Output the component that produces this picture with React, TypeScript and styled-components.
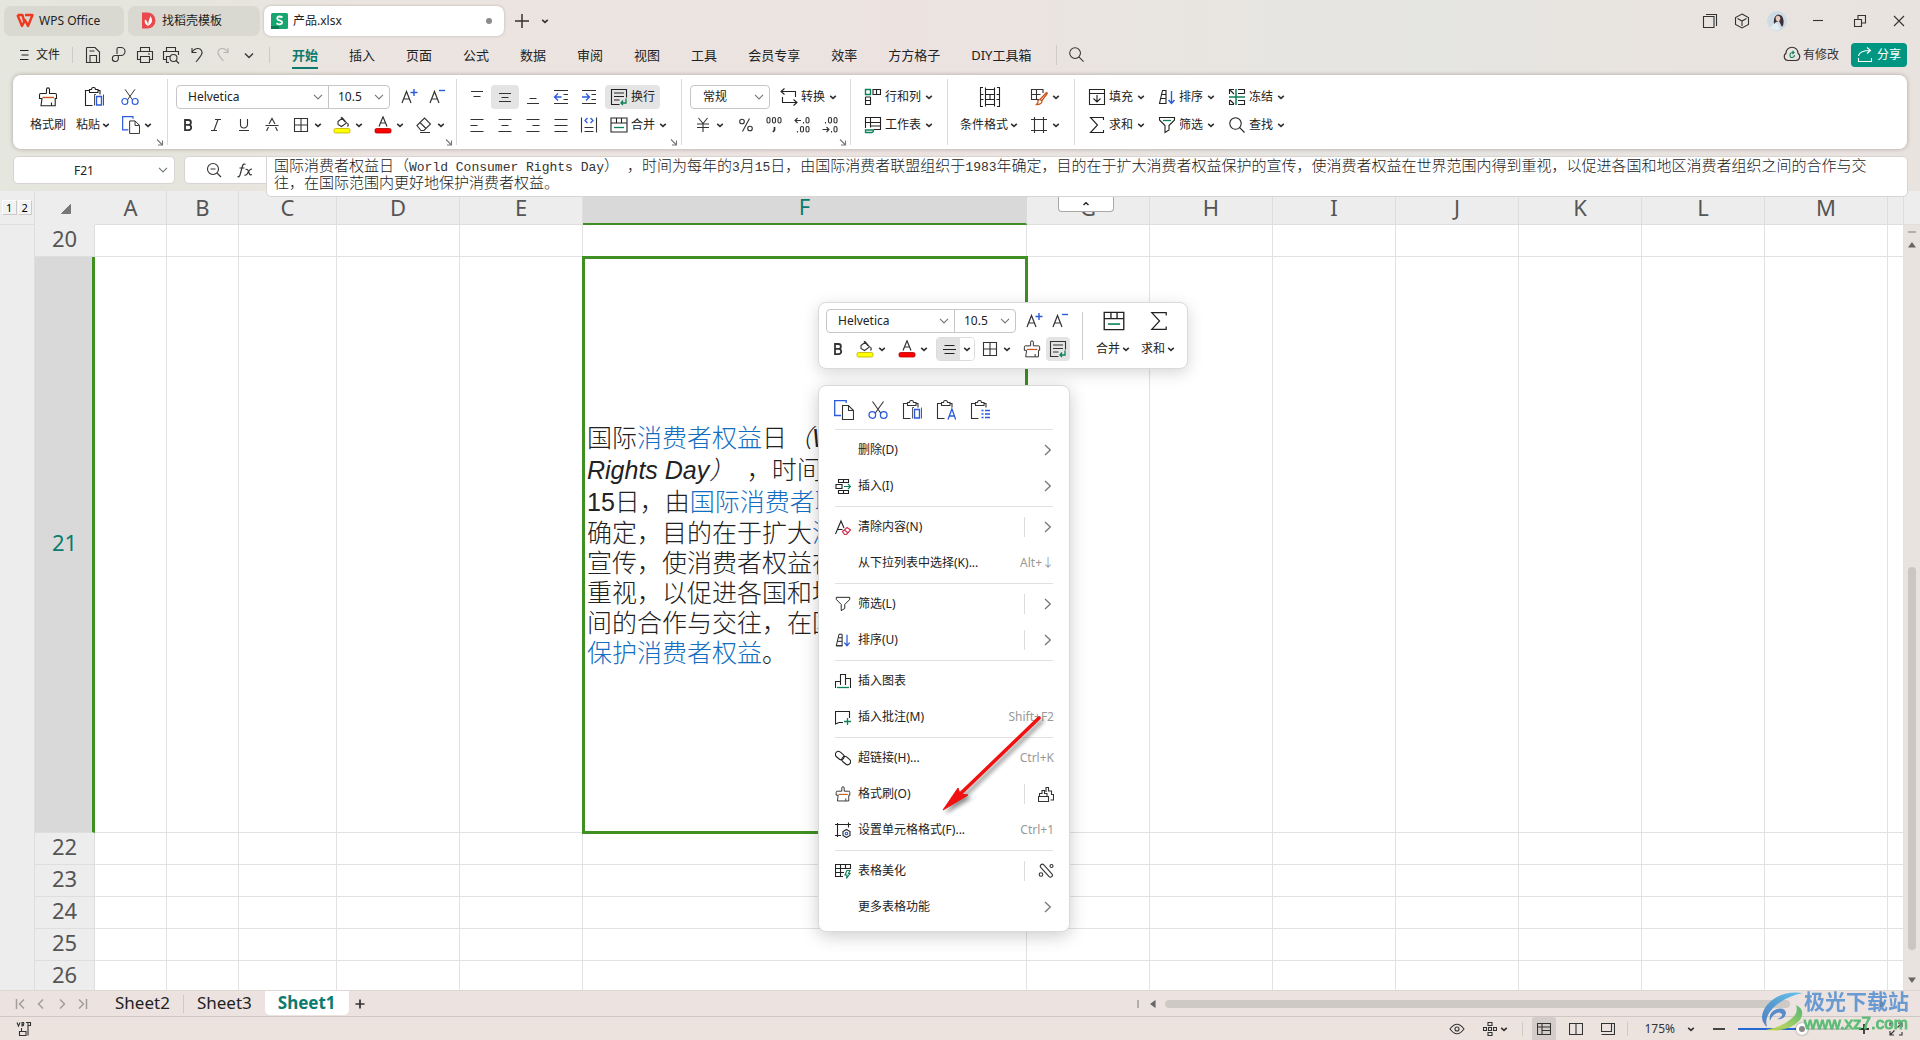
import React from "react";
import styled, { createGlobalStyle, css } from "styled-components";

const UI = `"Noto Sans", "Noto Sans CJK SC", sans-serif`;
const INK = "#333333";
const BLUE = "#2b5bdc";
const GREEN = "#0c8157";
const TEAL = "#0a7b6e";
const ORANGE = "#c8581e";
const LINE = "#dedede";

const Global = createGlobalStyle`
  * { box-sizing: border-box; }
  body { margin: 0; }
  button, select, input { font: inherit; color: inherit; }
`;

/* ---------- page and bars ---------- */

const Page = styled.div`
  position: relative;
  display: flex;
  flex-direction: column;
  height: 100vh;
  overflow: hidden;
  font: 12px/16px ${UI};
  color: #222;
  background: linear-gradient(90deg, #e5e6de 0%, #e6e5dd 10%, #ebe4e0 19%, #ece3e1 48%, #e8e5e1 62%, #e5e5e2 75%, #e8e4e0 84%, #e9e3e0 100%);
`;

const TitleBar = styled.header`
  display: flex;
  align-items: center;
  gap: 4px;
  height: 40px;
  padding: 1px 4px 0;
`;

const DocTab = styled.button<{ $w: number; $active?: boolean }>`
  display: flex;
  align-items: center;
  gap: 5px;
  width: ${(p) => p.$w}px;
  height: 30px;
  padding: 0 12px;
  border: 0;
  border-radius: 7px;
  background: ${(p) => (p.$active ? "#fff" : "#d9d9d1")};
  box-shadow: ${(p) => (p.$active ? "0 0 3px rgba(0,0,0,.22)" : "none")};
  padding-left: ${(p) => (p.$active ? 7 : 12)}px;
`;

const ModifiedDot = styled.span`
  width: 6px;
  height: 6px;
  margin-left: auto;
  border-radius: 50%;
  background: #8c8c8c;
`;

const Bare = styled.button<{ $w?: number }>`
  display: flex;
  align-items: center;
  justify-content: center;
  gap: 2px;
  width: ${(p) => (p.$w ? p.$w + "px" : "auto")};
  height: 24px;
  padding: 0;
  border: 0;
  background: none;
  color: ${INK};
`;

const Spacer = styled.div`
  flex: 1;
`;

const MenuRow = styled.nav`
  display: flex;
  align-items: center;
  height: 29px;
  margin-bottom: 6px;
  padding: 0 13px 0 18px;
`;

const FileButton = styled(Bare)`
  gap: 6px;
  width: 42px;
  margin-right: 12px;
  color: #222;
`;

const VLine = styled.span<{ $h?: number; $m?: string }>`
  flex: none;
  width: 1px;
  height: ${(p) => p.$h || 16}px;
  margin: ${(p) => p.$m || "0"};
  background: #cfc9c7;
`;

const Gap = styled.span<{ $w: number }>`
  flex: none;
  width: ${(p) => p.$w}px;
`;

const MenuTab = styled.button<{ $active?: boolean }>`
  height: 28px;
  margin-right: 31px;
  padding: 1px 0 0;
  border: 0;
  background: none;
  font-size: 13px;
  line-height: 18px;
  white-space: nowrap;
  ${(p) =>
    p.$active &&
    css`
      color: ${TEAL};
      font-weight: 700;
      box-shadow: inset 0 -2px 0 ${TEAL};
    `}
`;

const ShareButton = styled.button`
  display: flex;
  align-items: center;
  gap: 4px;
  height: 24px;
  margin-left: 12px;
  padding: 0 6px;
  border: 0;
  border-radius: 4px;
  background: #009682;
  color: #fff;
`;

/* ---------- ribbon ---------- */

const Ribbon = styled.section`
  display: flex;
  height: 74px;
  margin: 0 13px;
  padding: 4px 0;
  border-radius: 8px;
  background: #fff;
  box-shadow: 0 0 4px rgba(60, 40, 40, 0.35);
`;

const Group = styled.div<{ $w?: number; $pad: number; $last?: boolean }>`
  display: flex;
  flex-direction: column;
  flex: ${(p) => (p.$w ? "none" : "1")};
  width: ${(p) => (p.$w ? p.$w + "px" : "auto")};
  padding: 4px 0 0 ${(p) => p.$pad}px;
  border-right: ${(p) => (p.$last ? 0 : 1)}px solid #dadada;
`;

const Columns = styled.div`
  display: flex;
`;

const Row = styled.div<{ $gap?: number; $indent?: number }>`
  display: flex;
  align-items: center;
  gap: ${(p) => p.$gap || 0}px;
  height: 28px;
  padding-left: ${(p) => p.$indent || 0}px;
`;

const Tool = styled.button<{ $w?: number; $on?: boolean }>`
  display: flex;
  flex: none;
  align-items: center;
  justify-content: center;
  width: ${(p) => p.$w || 28}px;
  height: 24px;
  padding: 0;
  border: 0;
  border-radius: 4px;
  background: ${(p) => (p.$on ? "#e4e4e4" : "transparent")};
  color: ${INK};
`;

const SplitTool = styled.button<{ $w?: number }>`
  display: flex;
  flex: none;
  align-items: center;
  gap: 3px;
  width: ${(p) => p.$w || 41}px;
  height: 24px;
  padding: 0 0 0 6px;
  border: 0;
  background: none;
  color: ${INK};
`;

const TextTool = styled.button<{ $on?: boolean }>`
  display: flex;
  flex: none;
  align-items: center;
  gap: 3px;
  height: 24px;
  padding: 0 5px;
  border: 0;
  border-radius: 4px;
  background: ${(p) => (p.$on ? "#e4e4e4" : "transparent")};
  white-space: nowrap;
`;

const BigTool = styled.button`
  display: flex;
  flex: none;
  flex-direction: column;
  align-items: center;
  height: 56px;
  padding: 0 5px;
  border: 0;
  background: none;
  white-space: nowrap;
`;

const BigIcon = styled.span`
  display: flex;
  align-items: center;
  height: 28px;
`;

const BigLabel = styled.span`
  display: flex;
  align-items: center;
  gap: 1px;
  height: 28px;
`;

const Launcher = styled.button`
  display: flex;
  align-self: flex-end;
  height: 6px;
  margin-right: 3px;
  padding: 0;
  border: 0;
  background: none;
  color: #777;
`;

const PickFrame = styled.div`
  display: flex;
  flex: none;
  height: 24px;
  border: 1px solid #c6c6c6;
  border-radius: 4px;
  background: #fff;
`;

const PickLabel = styled.label<{ $w: number; $split?: boolean }>`
  display: grid;
  align-items: center;
  width: ${(p) => p.$w}px;
  border-left: ${(p) => (p.$split ? 1 : 0)}px solid #c6c6c6;
  > * {
    grid-area: 1 / 1;
  }
  > svg {
    justify-self: end;
    margin-right: 5px;
    pointer-events: none;
    color: #777;
  }
`;

const PickSelect = styled.select<{ $pad: number }>`
  width: 100%;
  height: 22px;
  padding: 0 0 0 ${(p) => p.$pad}px;
  border: 0;
  background: none;
  appearance: none;
  outline: 0;
`;

/* ---------- formula row ---------- */

const FormulaRow = styled.section`
  display: flex;
  gap: 9px;
  height: 28px;
  margin: 7px 12px 7px 13px;
`;

const NameBox = styled.label`
  display: grid;
  align-items: center;
  width: 162px;
  border: 1px solid #d9d4d1;
  border-radius: 5px;
  background: #fff;
  > * {
    grid-area: 1 / 1;
  }
  > svg {
    justify-self: end;
    margin-right: 6px;
    color: #777;
  }
`;

const NameInput = styled.input`
  width: 100%;
  height: 24px;
  padding: 0 20px 0 0;
  border: 0;
  background: none;
  text-align: center;
  outline: 0;
`;

const FormulaBox = styled.div`
  display: flex;
  flex: 1;
  align-items: flex-start;
  min-width: 0;
  height: 28px;
  border: 1px solid #d9d4d1;
  border-radius: 5px;
  background: #fff;
`;

const FormulaTools = styled.div`
  display: flex;
  align-items: center;
  justify-content: flex-end;
  gap: 9px;
  width: 81px;
  height: 26px;
  padding-right: 11px;
`;

const FormulaPanel = styled.div`
  position: relative;
  z-index: 2;
  flex: 1;
  min-width: 0;
  height: 41px;
  margin: -1px -1px 0 0;
  padding: 2px 16px 0 7px;
  border: 1px solid #d9d4d1;
  border-radius: 0 5px 5px 5px;
  background: #fff;
`;

const FormulaText = styled.div`
  font: 300 15px/17px "Liberation Mono", "Noto Sans CJK SC", monospace;
  color: #1a1a1a;
  outline: 0;
`;

const Latin = styled.span`
  font-size: 13px;
  line-height: 1;
  color: #333;
`;

const CollapseButton = styled.button`
  position: absolute;
  top: 40px;
  left: 791px;
  display: flex;
  align-items: center;
  justify-content: center;
  width: 56px;
  height: 15px;
  padding: 0;
  border: 1px solid #a9a9a9;
  border-top: 0;
  border-radius: 0 0 4px 4px;
  background: #fff;
`;

/* ---------- sheet ---------- */

const Sheet = styled.main`
  display: grid;
  grid-template-columns: 35px 1fr 16px;
  flex: 1;
  min-height: 0;
  overflow: hidden;
  background: #fff;
`;

const Outline = styled.aside`
  border-right: 1px solid ${LINE};
  background: #ededed;
`;

const OutlineLevels = styled.div`
  display: flex;
  gap: 1px;
  height: 34px;
  padding: 9px 2px 0;
  border-bottom: 1px solid ${LINE};
`;

const LevelButton = styled.button`
  width: 15px;
  height: 15px;
  padding: 0;
  border: 1px solid #c9c9c9;
  border-top-color: #fff;
  border-left-color: #fff;
  background: #f2f2f2;
  font-size: 11px;
  line-height: 12px;
  color: #000;
`;

const Table = styled.table`
  align-self: start;
  width: 100%;
  table-layout: fixed;
  border-collapse: separate;
  border-spacing: 0;
`;

const Col = styled.col<{ $w?: number }>`
  width: ${(p) => (p.$w ? p.$w + "px" : "auto")};
`;

const ColHead = styled.th<{ $on?: boolean }>`
  height: 34px;
  padding: 0 0 2px;
  border-right: 1px solid ${(p) => (p.$on ? "#d9d9d9" : LINE)};
  border-bottom: ${(p) => (p.$on ? "2px solid #3f8f22" : "1px solid " + LINE)};
  background: ${(p) => (p.$on ? "#d9d9d9" : "#ededed")};
  color: ${(p) => (p.$on ? TEAL : "#555")};
  font-weight: 400;
  font-size: 22px;
  line-height: 28px;
`;

const Corner = styled(ColHead)`
  border-right-color: #ededed;
  border-bottom-color: #ededed;
  > svg {
    display: block;
    margin: 4px auto 0 26px;
  }
`;

const RowHead = styled.th<{ $on?: boolean; $h: number }>`
  height: ${(p) => p.$h}px;
  padding: 0 0 5px ${(p) => (p.$on ? 2 : 0)}px;
  border-right: ${(p) => (p.$on ? "3px solid #3f8f22" : "1px solid " + LINE)};
  border-bottom: 1px solid ${LINE};
  background: ${(p) => (p.$on ? "#d9d9d9" : "#ededed")};
  color: ${(p) => (p.$on ? TEAL : "#555")};
  font-weight: 400;
  font-size: 22px;
  line-height: 26px;
`;

const Cell = styled.td<{ $on?: boolean }>`
  padding: 0 4px;
  border-right: 1px solid #e2e2e2;
  border-bottom: 1px solid #e2e2e2;
  ${(p) =>
    p.$on &&
    css`
      position: relative;
      outline: 3px solid #3f8f22;
      outline-offset: -2px;
    `}
`;

const TextLine = styled.div<{ $tall?: boolean }>`
  overflow: hidden;
  font: 300 25px "Liberation Sans", "Noto Sans CJK SC", sans-serif;
  height: ${(p) => (p.$tall ? 32 : 30)}px;
  line-height: ${(p) => (p.$tall ? 32 : 30)}px;
  color: #222;
  white-space: nowrap;
`;

const Hot = styled.a`
  color: #136ec2;
  text-decoration: none;
`;

const ScrollColumn = styled.div`
  display: flex;
  flex-direction: column;
  align-items: center;
  background: #e9e3e0;
`;

const ScrollHead = styled.div`
  align-self: stretch;
  height: 34px;
  margin-bottom: 6px;
  border-bottom: 1px solid ${LINE};
  background: #ededed;
`;

const Grip = styled.span<{ $v?: boolean }>`
  width: ${(p) => (p.$v ? 2 : 8)}px;
  height: ${(p) => (p.$v ? 8 : 2)}px;
  background: #b3afad;
`;

const ThumbV = styled.div`
  width: 8px;
  height: 383px;
  border-radius: 4px;
  background: #cbc6c4;
`;

const Arrow = styled.span<{ $m?: string }>`
  display: flex;
  margin: ${(p) => p.$m || 0};
  color: #666;
`;

/* ---------- sheet tabs and status ---------- */

const SheetBar = styled.footer`
  display: flex;
  align-items: center;
  flex: none;
  height: 27px;
  padding-left: 9px;
  border-top: 1px solid #dcd7d5;
  border-bottom: 1px solid #cfc7c5;
  background: #ece3e0;
`;

const SheetTab = styled.button<{ $active?: boolean }>`
  align-self: flex-start;
  height: 24px;
  padding: 0 13px;
  border: 0;
  border-radius: 0 0 5px 5px;
  background: ${(p) => (p.$active ? "#fff" : "transparent")};
  font-size: 17px;
  line-height: 22px;
  font-weight: ${(p) => (p.$active ? 700 : 400)};
  color: ${(p) => (p.$active ? TEAL : "#222")};
`;

const ThumbH = styled.div`
  flex: none;
  width: 625px;
  height: 8px;
  margin-left: 8px;
  margin-right: 88px;
  border-radius: 4px;
  background: #cfc9c6;
`;

const StatusBar = styled.footer`
  display: flex;
  align-items: center;
  flex: none;
  height: 23px;
  padding: 0 13px 0 14px;
  background: #ece3df;
`;

const ViewButton = styled(Bare)<{ $on?: boolean }>`
  border-radius: 3px;
  background: ${(p) => (p.$on ? "#d3cccb" : "none")};
`;

const ZoomSlider = styled.input`
  width: 112px;
  height: 12px;
  margin: 0 4px 0 9px;
  appearance: none;
  background: linear-gradient(90deg, #2468d2 58%, #c5bfbd 58%) center / 100% 2px no-repeat;
  &::-webkit-slider-thumb {
    appearance: none;
    width: 12px;
    height: 12px;
    border: 3px solid #fff;
    border-radius: 50%;
    background: #888;
    box-shadow: 0 0 2px rgba(0, 0, 0, 0.5);
  }
`;

/* ---------- floating layers ---------- */

const MiniBar = styled.div`
  position: absolute;
  top: 302px;
  left: 818px;
  z-index: 3;
  display: flex;
  height: 67px;
  padding: 4px 6px 0 7px;
  border: 1px solid #dadada;
  border-radius: 8px;
  background: #fff;
  box-shadow: 0 4px 16px rgba(0, 0, 0, 0.16);
`;

const MiniAlign = styled.div`
  display: flex;
  margin: 0 0 0 2px;
  border: 1px solid #dcdcdc;
  border-radius: 4px;
  overflow: hidden;
`;

const AlignHalf = styled.button<{ $w: number; $on?: boolean }>`
  display: flex;
  align-items: center;
  justify-content: center;
  width: ${(p) => p.$w}px;
  height: 22px;
  padding: 0;
  border: 0;
  background: ${(p) => (p.$on ? "#e2e2e2" : "#fff")};
`;

const Menu = styled.div`
  position: absolute;
  top: 385px;
  left: 818px;
  z-index: 3;
  width: 252px;
  padding-bottom: 6px;
  border: 1px solid #dadada;
  border-radius: 8px;
  background: #fff;
  box-shadow: 0 4px 18px rgba(0, 0, 0, 0.2);
`;

const ClipRow = styled.div`
  display: flex;
  gap: 10px;
  height: 41px;
  padding: 12px 13px 0;
`;

const Rule = styled.div`
  height: 1px;
  margin: 2px 16px;
  background: #e0e0e0;
`;

const MenuItem = styled.button`
  display: flex;
  align-items: center;
  gap: 7px;
  width: 100%;
  height: 36px;
  padding: 0 15px 0 16px;
  border: 0;
  background: none;
  text-align: left;
`;

const IconSlot = styled.span`
  display: flex;
  width: 16px;
`;

const ItemText = styled.span`
  flex: 1;
`;

const Shortcut = styled.span`
  color: #999;
`;

const Tail = styled.span<{ $line?: boolean }>`
  display: flex;
  align-items: center;
  justify-content: flex-end;
  width: 30px;
  height: 20px;
  border-left: ${(p) => (p.$line ? "1px solid #dcdcdc" : "0")};
  color: #777;
`;

const Pointer = styled.svg`
  position: absolute;
  top: 711px;
  left: 936px;
  z-index: 4;
  pointer-events: none;
  filter: drop-shadow(3px 3px 2px rgba(0, 0, 0, 0.45));
`;

const Watermark = styled.div`
  position: absolute;
  right: 11px;
  bottom: 7px;
  z-index: 5;
  display: flex;
  align-items: center;
  opacity: 0.9;
  pointer-events: none;
`;

const MarkName = styled.div`
  margin-bottom: 2px;
  font: 700 21px/23px "Liberation Sans", "Noto Sans CJK SC", sans-serif;
  color: #5b93d0;
`;

const MarkUrl = styled.div`
  font: 17px/18px "Liberation Sans", sans-serif;
  color: #4fb96d;
  -webkit-text-stroke: 1px #4fb96d;
`;

/* ---------- icons ---------- */

type P = { children?: React.ReactNode; s?: number; v?: number };
const Ic = ({ children, s = 18, v }: P) => (
  <Glyph width={s} height={s} viewBox={`0 0 ${v || s} ${v || s}`} aria-hidden="true">
    {children}
  </Glyph>
);

const Glyph = styled.svg`
  flex: none;
  fill: none;
  stroke: currentColor;
  stroke-width: 1.1;
`;

const Chev = () => (
  <Ic s={10}>
    <path d="M2.2 3.8 5 6.4l2.8-2.6" stroke="#333" strokeWidth="1.6" />
  </Ic>
);
const ThinChev = () => (
  <Ic s={10}>
    <path d="M1 2.8 5 7l4-4.2" />
  </Ic>
);
const RightChev = () => (
  <Ic s={12}>
    <path d="M3 1 8.3 6 3 11" strokeWidth="1.3" />
  </Ic>
);
const Brush = ({ s = 18 }: { s?: number }) => (
  <Ic s={s} v={20}>
    <path d="M8.5 6.5V2.4a1.5 1.5 0 0 1 3 0v4.1h5.7q1.3 0 1.3 1.4v3.6h-1.3v7.2H3l1-7.2H1.5V7.9q0-1.4 1.3-1.4h5.7M13.5 18.5v-3" />
    <path d="M4.5 10.5H16" stroke={ORANGE} strokeWidth="1.4" />
  </Ic>
);
const ClipBase = () => <path d="M5.500 3.500h-4v15h7M14.500 3.500h1.500v4M5.500 5.500v-3h2a1.700 1.700 0 0 1 4 0h2.500v3z" />;
const Paste = ({ s = 20 }: { s?: number }) => (
  <Ic s={s} v={20}>
    <ClipBase />
    <path d="M10.500 18.500v-11h1.500M19.500 18.500v-11" strokeWidth=".8" />
    <path d="M12.500 9.500h5v8.500h-5z" stroke={BLUE} strokeWidth="1.4" />
  </Ic>
);
const PasteText = () => (
  <Ic s={20}>
    <ClipBase />
    <path d="M12 19.500l3.900-10.500 3.800 10.500M13.300 16h5" stroke={BLUE} strokeWidth="1.3" />
  </Ic>
);
const PasteList = () => (
  <Ic s={20}>
    <ClipBase />
    <path d="M11.500 10.500h2M15 10.500h5M11.500 14h2M15 14h5M11.500 17.500h2M15 17.500h5" stroke={BLUE} strokeWidth="1.3" />
  </Ic>
);
const Cut = ({ s = 18 }: { s?: number }) => (
  <Ic s={s} v={20}>
    <path d="M4.500 1.500 13 13.500M15.500 1.500 7 13.500" />
    <circle cx="4.300" cy="15" r="3.300" stroke={BLUE} strokeWidth="1.3" />
    <circle cx="15.700" cy="15" r="3.300" stroke={BLUE} strokeWidth="1.3" />
  </Ic>
);
const Copy = ({ s = 18 }: { s?: number }) => (
  <Ic s={s} v={20}>
    <path d="M7 15.500H.700V.700h11.500V3" stroke={BLUE} strokeWidth="1.3" />
    <path d="M8.500 5.500h6l5 5v9h-11zM14.500 5.500v5h5" />
  </Ic>
);
const LetterA = ({ up }: { up?: boolean }) => (
  <Ic>
    <path d="M2 15 6.500 3.500 11 15M3.700 11h5.600" strokeWidth="1.2" />
    <path d={up ? "M10.500 4.500h7M14 1v7" : "M11 2.500h6"} stroke={BLUE} strokeWidth="1.4" />
  </Ic>
);
const Bold = () => (
  <Ic>
    <path d="M6 4h3.500a2.400 2.400 0 0 1 0 4.800H6zM6 8.800h4a2.700 2.700 0 0 1 0 5.300H6z" strokeWidth="1.8" />
  </Ic>
);
const Italic = () => (
  <Ic>
    <path d="M8 3.500h6M4 14.500h6M11 3.500 7 14.500" />
  </Ic>
);
const Underline = () => (
  <Ic>
    <path d="M5.500 3v5.500a3.500 3.500 0 0 0 7 0V3M4 14.500h10" />
  </Ic>
);
const Strike = () => (
  <Ic>
    <path d="M2.500 9.500h13M6 8 9 2.500 12 8M5.500 11l-2 4M12.500 11l2 4" />
  </Ic>
);
const Borders = () => (
  <Ic>
    <path d="M2.500 2.500h13v13h-13zM9 2.500v13M2.500 9h13" />
  </Ic>
);
const Fill = () => (
  <Ic>
    <path d="M5 5.500 9.500 2l4 5-5 3.500L5 8.500zM8 1l4 5M14.500 7q1.500 2 0 3.500" />
    <rect x="1" y="12.500" width="16" height="4.500" rx="1.500" fill="#ffff00" stroke="#b9b000" strokeWidth=".8" />
  </Ic>
);
const FontColor = () => (
  <Ic>
    <path d="M5 10.500 9 .800 13 10.500M6.500 7h5" strokeWidth="1.2" />
    <rect x="1" y="12.500" width="16" height="4.500" rx="1.500" fill="#ff0000" stroke="#b00000" strokeWidth=".8" />
  </Ic>
);
const Eraser = () => (
  <Ic>
    <path d="M2 9.500 9.500 2 15.500 8 9 14.500H6zM5 6.500l6 6M5 16.500h10" />
  </Ic>
);
const Lines = ({ d }: { d: string }) => (
  <Ic>
    <path d={d} />
  </Ic>
);
const Indent = ({ right }: { right?: boolean }) => (
  <Ic>
    <path d="M2 2.500h14M2 15.500h14M11.500 6.500H16M11.500 11.500H16" />
    <path d={right ? "M2 9h7M6 5.500 9.500 9 6 12.500" : "M9.500 9H2.500M6 5.500 2.500 9 6 12.500"} stroke={BLUE} strokeWidth="1.3" />
  </Ic>
);
const Distribute = () => (
  <Ic>
    <path d="M1.500 1.500v15M16.500 1.500v15M4.500 11.500h9M4.500 15.500h9" />
    <path d="M7.500 2 5 4.500 7.500 7M10.500 2 13 4.500 10.500 7" stroke={BLUE} strokeWidth="1.3" />
  </Ic>
);
const Wrap = () => (
  <Ic>
    <path d="M9.500 16.500h-8v-15h15v8M4 5h10M4 8.500h10M4 12h5.500" />
    <path d="M16 10.500v4.500h-4.500M13 12.500 11 15l2 2" stroke={GREEN} strokeWidth="1.3" />
  </Ic>
);
const Merge = ({ s = 18 }: { s?: number }) => (
  <Ic s={s} v={18}>
    <path d="M1 2h16v14H1zM1 7h16M6.500 2v5M11.500 2v5" />
    <path d="M4 11.500h10" stroke={GREEN} strokeWidth="1.3" />
  </Ic>
);
const Convert = () => (
  <Ic>
    <path d="M1 3.500h14.500V9M4.500.500l-3.500 3 3.500 3M2.500 9v5.500H16.500M13.500 11.500l3.500 3-3.500 3" />
  </Ic>
);
const Yen = () => (
  <Ic>
    <path d="M4.500 2 9 7.500 13.500 2M9 7.500V16M3 8h12M3 11.500h12" />
  </Ic>
);
const Percent = () => (
  <Ic>
    <circle cx="5" cy="5.500" r="2.300" />
    <circle cx="13" cy="12.500" r="2.300" />
    <path d="M12.500 2.500 5.500 15.500" />
  </Ic>
);
const Zero = ({ x, y }: { x: number; y: number }) => <rect x={x} y={y} width="3" height="5.500" rx="1.500" />;
const Thousands = () => (
  <Ic>
    <Zero x={2} y={1.5} />
    <Zero x={7.5} y={1.5} />
    <Zero x={13} y={1.5} />
    <path d="M9.500 11v3l-1.500 2" strokeWidth="1.7" />
  </Ic>
);
const Decimal = ({ less }: { less?: boolean }) => (
  <Ic>
    {less ? (
      <>
        <Zero x={7.5} y={1.5} />
        <Zero x={13} y={1.5} />
        <path d="M4.500 6v1.500M10.500 15v1.500M1.500 13.500h6M5.500 11l2.500 2.500L5.500 16" />
        <Zero x={13} y={10.5} />
      </>
    ) : (
      <>
        <path d="M8 4.500H2M4.500 2 2 4.500 4.500 7M10.500 6v1.500M4.500 15v1.500" />
        <Zero x={13} y={1.5} />
        <Zero x={7.5} y={10.5} />
        <Zero x={13} y={10.5} />
      </>
    )}
  </Ic>
);
const RowsCols = () => (
  <Ic>
    <path d="M9 1.500h7.500v5H9zM12.500 1.500v5M1.500 9v7.500h5V9M1.500 12.500h5M1.500 9h5" />
    <path d="M1.500 1.500h5v5h-5z" stroke={GREEN} strokeWidth="1.4" />
  </Ic>
);
const Worksheet = () => (
  <Ic>
    <path d="M1.500 12V1.500h15v12H10M1.500 6.500h15M6.500 1.500v10M6.500 10h10" />
    <path d="M1.500 16.500V14h8q0 2.500-2 2.500z" stroke={GREEN} strokeWidth="1.3" />
  </Ic>
);
const CondFormat = () => (
  <Ic s={22}>
    <path d="M4 1.500H1.500v19H4M18 1.500h2.500v19H18M6.500 1.500v19M15.500 1.500v19M6.500 3.500h9M6.500 8.500h9M6.500 13.500h9M6.500 18.500h9M1.500 8.500h3M1.500 13.500h3M17.500 8.500h3M17.500 13.500h3M11 8.500v5" />
  </Ic>
);
const TableStyle = () => (
  <Ic>
    <path d="M9 11.500H1.500v-10h11.500V5M1.500 6.500h9M6.500 1.500v10" />
    <path d="M16.500 4.500 10 11.500M16.500 4.500q1 0 .500 1.500L12 12.500M10 11.500l2 1.500q0 3.500-5.500 3.500 2-2 1.500-4z" stroke={ORANGE} strokeWidth="1.3" />
  </Ic>
);
const CellFrame = () => (
  <Ic>
    <path d="M4.500 1v16M13.500 1v16M1 3.500h16M1 14.500h16" />
  </Ic>
);
const FillDown = () => (
  <Ic>
    <path d="M1.500 1.500h15v4h-15zM4 5.500H1.500v11h15v-11M9 7v7M5.500 10.500 9 14l3.500-3.500" />
  </Ic>
);
const SortIcon = ({ s = 18 }: { s?: number }) => (
  <Ic s={s} v={18}>
    <path d="M4.500 2.500h3.500v13H1.500zM4 6.500h4M3 10.500h5M1 15.500h7.500" />
    <path d="M13.500 3v12M10.500 12l3 3.500 3-3.500" stroke={BLUE} strokeWidth="1.4" />
  </Ic>
);
const Freeze = () => (
  <Ic>
    <path d="M10 1.500h6.500v4M16.500 12v4.500H10M10 5.500h6.500M10 12.500h6.500M2 2l4 4M1.500 6v-4.500H6M2 12l4 4M1.500 12v4.500H6" />
    <path d="M8 1v16M1 9h16" stroke={GREEN} strokeWidth="1.5" />
  </Ic>
);
const Sum = ({ s = 18 }: { s?: number }) => (
  <Ic s={s} v={18}>
    <path d="M15.500 4V1.500h-13L9.500 9l-7 7.500h13V14" />
  </Ic>
);
const Filter = ({ s = 18, line }: { s?: number; line?: boolean }) => (
  <Ic s={s} v={18}>
    <path d="M1.500 1.500h15v2.500L11 9.500V14l-4 2.500v-7L1.500 4z" />
    {line && <path d="M5 4.500h8" stroke={GREEN} strokeWidth="1.3" />}
  </Ic>
);
const Search = ({ s = 18 }: { s?: number }) => (
  <Ic s={s} v={18}>
    <circle cx="7.500" cy="7.500" r="5.700" />
    <path d="M11.700 11.700 16.500 16.500" />
  </Ic>
);
const LaunchMark = () => (
  <Ic s={8}>
    <path d="M1 .500 6 5.500M6.500 1.500v4.500H2" />
  </Ic>
);

/* ---------- composed controls ---------- */

const Launch = ({ label }: { label: string }) => (
  <Launcher aria-label={label}>
    <LaunchMark />
  </Launcher>
);

const Split = ({ label, w, children }: { label: string; w?: number; children: React.ReactNode }) => (
  <SplitTool aria-label={label} $w={w}>
    {children}
    <Chev />
  </SplitTool>
);

const Labeled = ({ icon, text, chev = true, on }: { icon: React.ReactNode; text: string; chev?: boolean; on?: boolean }) => (
  <TextTool $on={on}>
    {icon}
    {text}
    {chev && <Chev />}
  </TextTool>
);

const Big = ({ icon, text, chev }: { icon: React.ReactNode; text: string; chev?: boolean }) => (
  <BigTool>
    <BigIcon>{icon}</BigIcon>
    <BigLabel>
      {text}
      {chev && <Chev />}
    </BigLabel>
  </BigTool>
);

const Pick = ({ label, value, w, pad, split }: { label: string; value: string; w: number; pad: number; split?: boolean }) => (
  <PickLabel $w={w} $split={split}>
    <PickSelect aria-label={label} defaultValue={value} $pad={pad}>
      <option>{value}</option>
    </PickSelect>
    <ThinChev />
  </PickLabel>
);

const menuTabs = ["开始", "插入", "页面", "公式", "数据", "审阅", "视图", "工具", "会员专享", "效率", "方方格子", "DIY工具箱"];

const quickIcons: [string, React.ReactNode][] = [
  ["保存", <Ic key="s"><path d="M2.500 1.500h8.500l4.500 4.500v10.500H13M2.500 1.500v15h13M6 16V9.500h6.500V16M5.500 5h5" /></Ic>],
  ["输出为PDF", <Ic key="o"><path d="M7 8V3q0-1.500 1.500-1.500h2.500a4 4 0 0 1 0 8H5.500a3 3 0 1 0 2.800 3.500V9.500" /></Ic>],
  ["打印", <Ic key="p"><path d="M4.500 5.500v-4h9v4M4 13.500H1.500v-8h15v8H14M4.500 10.500h9v6h-9zM12 8h2" /></Ic>],
  ["打印预览", <Ic key="v"><path d="M4.500 5.500v-4h9v4M4 13.500H1.500v-8h15V9M7 16.500H4.500v-6H8" /><circle cx="11.500" cy="12" r="3.500" /><path d="m14 14.500 3 3" /></Ic>],
  ["撤销", <Ic key="u"><path d="M4 2v4.500h4.500M4 6.500Q6 2.500 10 2.500a4 4 0 0 1 3.500 6q-1 2-5.500 7.500" /></Ic>],
  ["恢复", <Ic key="r"><g stroke="#b5b2af"><path d="M14 2v4.500H9.500M14 6.500Q12 2.500 8 2.500a4 4 0 0 0-3.500 6q1 2 5 6.500" /></g></Ic>],
  ["更多", <Ic key="m"><path d="M5 7.500l4 4 4-4" strokeWidth="1.3" /></Ic>],
];

type Item = { text: string; icon?: React.ReactNode; hotkey?: string; tail?: React.ReactNode; line?: boolean };

const menuGroups: Item[][] = [
  [
    { text: "删除(D)", tail: <RightChev /> },
    {
      text: "插入(I)",
      tail: <RightChev />,
      icon: <Ic s={16}><path d="M3.500 1.500h10v3h-10zM8.500 1.500v3M1 6.500h6v4H1zM3.500 12.500h10v3h-10zM8.500 12.500v3" /><path d="M9 8.500h6.500M13 6l2.500 2.500L13 11" stroke={GREEN} /></Ic>,
    },
  ],
  [
    {
      text: "清除内容(N)",
      tail: <RightChev />,
      line: true,
      icon: <Ic s={16}><path d="M.500 15 6 2l3 7M2.500 10.500h5" /><path d="m7.500 12.500 4.500-4 3.500 2.500-4 4.500h-2zM9.500 11l3.500 3" stroke="#d03352" strokeWidth="1.2" /></Ic>,
    },
    { text: "从下拉列表中选择(K)...", hotkey: "Alt+↓" },
  ],
  [
    { text: "筛选(L)", tail: <RightChev />, line: true, icon: <Filter s={16} /> },
    { text: "排序(U)", tail: <RightChev />, line: true, icon: <SortIcon s={16} /> },
  ],
  [
    { text: "插入图表", icon: <Ic s={16}><path d="M.500 15V8.500h5V12M5.500 12V1.500h5V12M10.500 5.500h5V15" /><path d="M2 14.500h12" stroke={GREEN} strokeWidth="1.3" /></Ic> },
    { text: "插入批注(M)", hotkey: "Shift+F2", icon: <Ic s={16}><path d="M8 13.500H4L.500 15V2.500h14V9" /><path d="M9 12.500h7M12.500 9v7" stroke={GREEN} strokeWidth="1.3" /></Ic> },
  ],
  [
    { text: "超链接(H)...", hotkey: "Ctrl+K", icon: <Ic s={16}><rect x="0" y="2.500" width="9.500" height="6" rx="3" transform="rotate(40 4.700 5.500)" /><rect x="6.500" y="7.500" width="9.500" height="6" rx="3" transform="rotate(40 11.200 10.500)" /></Ic> },
    {
      text: "格式刷(O)",
      line: true,
      icon: <Brush s={16} />,
      tail: <Ic s={16}><path d="M.500 10.500h10v5H.500zM1.500 10.500v-3h2.500V4.500h2.500v3H9v3M8 6V1.500h2.500V5h3v3.500h2v5.500H12.500" stroke={INK} /></Ic>,
    },
    { text: "设置单元格格式(F)...", hotkey: "Ctrl+1", icon: <Ic s={16}><path d="M2.500 1v14M0 2.500h16M13.500.500V5.500M0 13.500h6" /><path d="m11.500 7.500 3.500 2v4l-3.500 2-3.500-2v-4z" /><circle cx="11.500" cy="11.500" r="1.300" stroke={BLUE} /></Ic> },
  ],
  [
    {
      text: "表格美化",
      line: true,
      icon: <Ic s={16}><path d="M8 13.500H.500v-12h15V6M.500 5.500h15M.500 9.500H9M5.500 1.500v12M10.500 1.500v4" /><path d="M12 7.500h3l-1.500 3H15l-3.500 5 .500-3.500h-2z" stroke={GREEN} /></Ic>,
      tail: <Ic s={16}><g stroke={INK}><rect x="6.500" y="0" width="4" height="16" rx="2" transform="rotate(-42 8 8)" /><circle cx="13.500" cy="3" r="1.500" /><circle cx="3" cy="11.500" r="1.800" /></g></Ic>,
    },
    { text: "更多表格功能", tail: <RightChev /> },
  ],
];

const columns = [
  ["A", 72], ["B", 72], ["C", 98], ["D", 123], ["E", 123], ["F", 444], ["G", 123],
  ["H", 123], ["I", 123], ["J", 123], ["K", 123], ["L", 123], ["M", 123], ["", 0],
] as [string, number][];

const rows = [[20, 32], [21, 576], [22, 32], [23, 32], [24, 32], [25, 32], [26, 32]];

const CellText = () => (
  <>
    <TextLine $tall>国际<Hot>消费者权益</Hot>日<i>（World Consumer</i></TextLine>
    <TextLine $tall><i>Rights Day）</i>&ensp;，时间为每年的3月</TextLine>
    <TextLine $tall>15日，由<Hot>国际消费者联盟组织</Hot>于1983年</TextLine>
    <TextLine>确定，目的在于扩大<Hot>消费者权益保护</Hot>的</TextLine>
    <TextLine>宣传，使消费者权益在世界范围内得到</TextLine>
    <TextLine>重视，以促进各国和地区消费者组织之</TextLine>
    <TextLine>间的合作与交往，在国际范围内更好地</TextLine>
    <TextLine><Hot>保护消费者权益</Hot>。</TextLine>
  </>
);

export default function App() {
  return (
    <Page>
      <Global />
      <TitleBar>
        <DocTab $w={120}>
          <svg width="18" height="16" viewBox="0 0 18 16" aria-hidden="true">
            <path d="M1.500 2h5l2 8M1.500 2l4.500 11 3-6 3 6 4.500-11H9" fill="none" stroke="#f0381f" strokeWidth="2.4" strokeLinejoin="round" />
          </svg>
          WPS Office
        </DocTab>
        <DocTab $w={132}>
          <svg width="17" height="17" viewBox="0 0 17 17" aria-hidden="true">
            <path d="M2 .500h5.500a8 8 0 0 1 0 16H2z" fill="#e9494c" />
            <path d="M8 14Q3.500 11 5 7.500 8 9 8 14q0-5 2.500-10 4 6-2.500 10" fill="#fff" />
          </svg>
          找稻壳模板
        </DocTab>
        <DocTab $w={240} $active>
          <svg width="17" height="16" viewBox="0 0 17 16" aria-hidden="true">
            <rect width="17" height="16" rx="1.500" fill="#17a572" />
            <rect y="13" width="8" height="3" fill="#0b7d53" />
            <path d="M11.500 4.500Q8.500 2.600 6.500 4.300 5.500 6.500 8.500 7.300 12 8.300 10.800 10.500 8.500 12.300 5.500 10.300" fill="none" stroke="#fff" strokeWidth="1.8" />
          </svg>
          产品.xlsx
          <ModifiedDot />
        </DocTab>
        <Bare $w={28} aria-label="新建"><Ic><path d="M9 2v14M2 9h14" strokeWidth="1.5" /></Ic></Bare>
        <Bare aria-label="标签列表"><Chev /></Bare>
        <Spacer />
        <Bare $w={28} aria-label="窗口"><Ic s={16}><path d="M1.500 3.500h10.500v11H1.500zM4 1.500h10.500V13" /></Ic></Bare>
        <Bare $w={28} aria-label="应用"><Ic s={16}><path d="m8 1 6.500 3.500v7L8 15l-6.500-3.500v-7zM3.500 5.500 8 8l4.500-2.500M8 8v5" /></Ic></Bare>
        <Bare $w={34} aria-label="账户">
          <svg width="20" height="20" viewBox="0 0 20 20" aria-hidden="true">
            <circle cx="10" cy="10" r="10" fill="#cddbe4" />
            <path d="M7 13Q6 5 11 3.500q5 0 5.500 6 .500 5-1.500 6.500l-3-6-3 1z" fill="#3b3036" />
            <ellipse cx="11" cy="7.500" rx="2.300" ry="2.800" fill="#e8c9bd" />
            <path d="M3 17q4-6 8-4l2 5.500q-6 1.500-10-1.500" fill="#e3edf2" />
          </svg>
        </Bare>
        <Bare $w={40} aria-label="最小化"><Ic s={12}><path d="M1 5.500h10" /></Ic></Bare>
        <Bare $w={36} aria-label="还原"><Ic s={14}><path d="M1.500 5.500h7v7h-7zM5 5.500v-4h7.500V9H8.500" /></Ic></Bare>
        <Bare $w={34} aria-label="关闭"><Ic s={12}><path d="m1 1 10 10M11 1 1 11" /></Ic></Bare>
      </TitleBar>

      <MenuRow>
        <FileButton><Ic s={12}><path d="M2 1.500h8.500M3.500 6h7M2 10.500h8.500" /></Ic>文件</FileButton>
        <VLine $m="0 7px 0 0" />
        {quickIcons.map(([label, icon]) => (
          <Bare key={label} $w={26} aria-label={label}>{icon}</Bare>
        ))}
        <VLine $m="0 22px 0 7px" />
        {menuTabs.map((t, i) => (
          <MenuTab key={t} $active={i === 0}>{t}</MenuTab>
        ))}
        <VLine $h={20} $m="0 11px 0 -6px" />
        <Bare aria-label="搜索"><Search s={17} /></Bare>
        <Spacer />
        <Bare>
          <Ic><path d="M5 14.500a4 4 0 0 1-2-7.300 6 6 0 0 1 12 0 4 4 0 0 1-2 7.300z" /><path d="M11 6.500q-4-.500-4 2.500 0 3 2.500 2.500 2-.500 2-2.500M9.500 5 11 6.500 9.500 8" stroke={GREEN} /></Ic>
          有修改
        </Bare>
        <ShareButton>
          <Ic s={16}><path d="M1.500 9q1-5.500 11.500-5.500M10 .500l3.500 3-3.500 3M1.500 11v3.500h13V11" /></Ic>
          分享
        </ShareButton>
      </MenuRow>

      <Ribbon>
        <Group $w={155} $pad={12}>
          <Columns>
            <Big icon={<Brush s={20} />} text="格式刷" />
            <Big icon={<Paste />} text="粘贴" chev />
            <div>
              <Row><Tool aria-label="剪切"><Cut /></Tool></Row>
              <Row><Split label="复制" w={38}><Copy /></Split></Row>
            </div>
          </Columns>
          <Launch label="剪贴板设置" />
        </Group>

        <Group $w={289} $pad={6}>
          <Row $indent={2}>
            <PickFrame>
              <Pick label="字体" value="Helvetica" w={151} pad={11} />
              <Pick label="字号" value="10.5" w={61} pad={9} split />
            </PickFrame>
            <Row $indent={5}>
              <Tool aria-label="增大字号"><LetterA up /></Tool>
              <Tool aria-label="减小字号"><LetterA /></Tool>
            </Row>
          </Row>
          <Row>
            <Tool aria-label="加粗"><Bold /></Tool>
            <Tool aria-label="倾斜"><Italic /></Tool>
            <Tool aria-label="下划线"><Underline /></Tool>
            <Tool aria-label="删除线"><Strike /></Tool>
            <Split label="边框"><Borders /></Split>
            <Split label="填充颜色"><Fill /></Split>
            <Split label="字体颜色"><FontColor /></Split>
            <Split label="清除"><Eraser /></Split>
          </Row>
          <Launch label="字体设置" />
        </Group>

        <Group $w={225} $pad={6}>
          <Row>
            <Tool aria-label="顶端对齐"><Lines d="M3 3.500h12M5.500 8.500h7" /></Tool>
            <Tool aria-label="垂直居中" $on><Lines d="M3 5.500h12M5.500 9.500h7M3 13.500h12" /></Tool>
            <Tool aria-label="底端对齐"><Lines d="M5.500 10.500h7M3 15.500h12" /></Tool>
            <Tool aria-label="减少缩进"><Indent /></Tool>
            <Tool aria-label="增加缩进"><Indent right /></Tool>
            <Row $indent={2}><Labeled icon={<Wrap />} text="换行" chev={false} on /></Row>
          </Row>
          <Row>
            <Tool aria-label="左对齐"><Lines d="M2.500 3.500h13M2.500 9.500h7M2.500 15.500h13" /></Tool>
            <Tool aria-label="水平居中"><Lines d="M2.500 3.500h13M5.500 9.500h7M2.500 15.500h13" /></Tool>
            <Tool aria-label="右对齐"><Lines d="M2.500 3.500h13M8.500 9.500h7M2.500 15.500h13" /></Tool>
            <Tool aria-label="两端对齐"><Lines d="M2.500 3.500h13M2.500 9.500h13M2.500 15.500h13" /></Tool>
            <Tool aria-label="分散对齐"><Distribute /></Tool>
            <Row $indent={2}><Labeled icon={<Merge />} text="合并" /></Row>
          </Row>
          <Launch label="对齐设置" />
        </Group>

        <Group $w={169} $pad={6}>
          <Row $gap={5} $indent={2}>
            <PickFrame>
              <Pick label="数字格式" value="常规" w={78} pad={12} />
            </PickFrame>
            <Labeled icon={<Convert />} text="转换" />
          </Row>
          <Row>
            <Split label="货币格式" w={44}><Yen /></Split>
            <Tool aria-label="百分比"><Percent /></Tool>
            <Tool aria-label="千位分隔"><Thousands /></Tool>
            <Tool aria-label="增加小数位"><Decimal /></Tool>
            <Tool aria-label="减少小数位"><Decimal less /></Tool>
          </Row>
          <Launch label="数字设置" />
        </Group>

        <Group $w={97} $pad={8}>
          <Row><Labeled icon={<RowsCols />} text="行和列" /></Row>
          <Row><Labeled icon={<Worksheet />} text="工作表" /></Row>
        </Group>

        <Group $w={127} $pad={7}>
          <Columns>
            <Big icon={<CondFormat />} text="条件格式" chev />
            <div>
              <Row><Split label="表格样式"><TableStyle /></Split></Row>
              <Row><Split label="单元格样式"><CellFrame /></Split></Row>
            </div>
          </Columns>
        </Group>

        <Group $pad={8} $last>
          <Row $gap={2}>
            <Labeled icon={<FillDown />} text="填充" />
            <Labeled icon={<SortIcon />} text="排序" />
            <Labeled icon={<Freeze />} text="冻结" />
          </Row>
          <Row $gap={2}>
            <Labeled icon={<Sum />} text="求和" />
            <Labeled icon={<Filter line />} text="筛选" />
            <Labeled icon={<Search />} text="查找" />
          </Row>
        </Group>
      </Ribbon>

      <FormulaRow>
        <NameBox>
          <NameInput aria-label="名称框" defaultValue="F21" />
          <ThinChev />
        </NameBox>
        <FormulaBox>
          <FormulaTools>
            <Bare $w={24} aria-label="查看公式"><Ic s={16}><circle cx="7" cy="7" r="5.500" /><path d="m11 11 4 4M4.500 7h5" /></Ic></Bare>
            <Bare $w={20} aria-label="插入函数">
              <Ic s={16}><path d="M8.500 2.500Q6.500 1 5.500 4L3 13Q2 15.500.500 14.500M2.500 6h5M8.500 7.500q2-1 3 2l1 2.500q.500 1.500 2.500.500M15 7q-2.500 0-4 3.500T7.500 13" strokeWidth="1.2" /></Ic>
            </Bare>
          </FormulaTools>
          <FormulaPanel>
            <FormulaText role="textbox" aria-label="编辑栏" contentEditable suppressContentEditableWarning>
              国际消费者权益日（<Latin>World Consumer Rights Day</Latin>）<Latin> </Latin>，时间为每年的<Latin>3</Latin>月<Latin>15</Latin>日，由国际消费者联盟组织于<Latin>1983</Latin>年确定，目的在于扩大消费者权益保护的宣传，使消费者权益在世界范围内得到重视，以促进各国和地区消费者组织之间的合作与交往，在国际范围内更好地保护消费者权益。
            </FormulaText>
            <CollapseButton aria-label="收起编辑栏"><Ic s={10}><path d="M2.500 6 5 3.800 7.500 6" strokeWidth="1.5" /></Ic></CollapseButton>
          </FormulaPanel>
        </FormulaBox>
      </FormulaRow>

      <Sheet>
        <Outline>
          <OutlineLevels>
            <LevelButton>1</LevelButton>
            <LevelButton>2</LevelButton>
          </OutlineLevels>
        </Outline>
        <Table>
          <colgroup>
            <Col $w={60} />
            {columns.map(([c, w]) => <Col key={c} $w={w} />)}
          </colgroup>
          <thead>
            <tr>
              <Corner aria-label="全选">
                <svg width="10" height="10" viewBox="0 0 10 10"><path d="M9.500.500v9h-9z" fill="#777" stroke="#777" strokeLinejoin="round" /></svg>
              </Corner>
              {columns.map(([c]) => <ColHead key={c} $on={c === "F"}>{c}</ColHead>)}
            </tr>
          </thead>
          <tbody>
            {rows.map(([n, h]) => (
              <tr key={n}>
                <RowHead $h={h} $on={n === 21}>{n}</RowHead>
                {columns.map(([c]) => {
                  const on = n === 21 && c === "F";
                  return <Cell key={c} $on={on}>{on && <CellText />}</Cell>;
                })}
              </tr>
            ))}
          </tbody>
        </Table>
        <ScrollColumn>
          <ScrollHead />
          <Grip />
          <Arrow $m="8px 0 0"><Ic s={8}><path d="M4 2 7 6H1z" fill="currentColor" /></Ic></Arrow>
          <Spacer />
          <ThumbV />
          <Arrow $m="26px 0 9px"><Ic s={8}><path d="M4 6 7 2H1z" fill="currentColor" /></Ic></Arrow>
        </ScrollColumn>
      </Sheet>

      <SheetBar>
        {["M2.500 1v10M10 1.500 5.500 6l4.500 4.500", "M8 1.500 3.500 6 8 10.500", "M4 1.500 8.500 6 4 10.500", "M9.500 1v10M2 1.500 6.500 6 2 10.500"].map((d, i) => (
          <Bare key={d} $w={21} aria-label={["第一张", "上一张", "下一张", "最后一张"][i]}>
            <Ic s={12}><path d={d} stroke="#a39d9b" strokeWidth="1.5" /></Ic>
          </Bare>
        ))}
        <Gap $w={9} />
        <SheetTab>Sheet2</SheetTab>
        <VLine $h={18} />
        <SheetTab>Sheet3</SheetTab>
        <SheetTab $active>Sheet1</SheetTab>
        <Bare $w={22} aria-label="新建工作表"><Ic s={12}><path d="M6 1.500v9M1.500 6h9" strokeWidth="1.7" /></Ic></Bare>
        <Spacer />
        <Grip $v />
        <Arrow $m="0 0 0 10px"><Ic s={8}><path d="M2 4 6 1v6z" fill="currentColor" /></Ic></Arrow>
        <ThumbH />
        <Arrow $m="0 34px 0 0"><Ic s={8}><path d="M6 4 2 1v6z" fill="currentColor" /></Ic></Arrow>
      </SheetBar>

      <StatusBar>
        <Bare $w={20} aria-label="宏"><Ic s={16}><path d="M1 1.500 2.500 5 4 1.500M6 1.500h1.500q1 1.500-1 1.700 2.500.800 0 1.800H6zM10 1.500h4.500v3H12v9.500M10 1.500h2V14.500M3.500 14.500v-4H10v4zM5.500 10V7" /></Ic></Bare>
        <Spacer />
        <Bare $w={20} aria-label="护眼模式"><Ic s={16}><path d="M1 8q7-9.500 14 0-7 9.500-14 0z" /><circle cx="8" cy="8" r="2" /></Ic></Bare>
        <Gap $w={16} />
        <Bare aria-label="阅读模式"><Ic s={14}><path d="M5 .500h4v3H5zM5 10.500h4v3H5zM.500 5.500h3v3h-3zM10.500 5.500h3v3h-3zM5.500 5.500h3v3h-3z" /></Ic><Chev /></Bare>
        <VLine $h={14} $m="0 9px 0 13px" />
        <ViewButton $w={24} $on aria-label="普通视图"><Ic s={14}><path d="M.500 1.500h13v11H.500zM.500 5h13M5 1.500v11M5 8.500h8" /></Ic></ViewButton>
        <Gap $w={8} />
        <ViewButton $w={24} aria-label="页面布局"><Ic s={14}><path d="M.500 1.500h13v11H.500zM7 1.500v11" /></Ic></ViewButton>
        <Gap $w={8} />
        <ViewButton $w={24} aria-label="分页预览"><Ic s={14}><path d="M.500 1.500h10v8H.500zM13.500 1v11.500H.500M10.500 1.500h3" /></Ic></ViewButton>
        <VLine $h={14} $m="0 16px 0 7px" />
        <Bare>175%</Bare>
        <Gap $w={9} />
        <Bare $w={14} aria-label="缩放比例"><Chev /></Bare>
        <Gap $w={11} />
        <Bare $w={20} aria-label="缩小"><Ic s={12}><path d="M0 6h12" strokeWidth="1.8" /></Ic></Bare>
        <ZoomSlider type="range" aria-label="缩放" min={0} max={100} defaultValue={58} />
        <Bare $w={20} aria-label="放大"><Ic s={12}><path d="M6 1v10M1 6h10" strokeWidth="1.8" /></Ic></Bare>
        <Gap $w={11} />
        <Bare $w={22} aria-label="全屏"><Ic s={14}><path d="M8.500 5.500 13 1M9 1h4v4M5.500 8.500 1 13M1 9v4h4M1 4V1h3M13 10v3h-3" /></Ic></Bare>
      </StatusBar>

      <MiniBar>
        <div>
          <Row>
            <PickFrame>
              <Pick label="浮动栏字体" value="Helvetica" w={127} pad={11} />
              <Pick label="浮动栏字号" value="10.5" w={61} pad={9} split />
            </PickFrame>
            <Row $indent={5}>
              <Tool $w={26} aria-label="增大字号"><LetterA up /></Tool>
              <Tool $w={26} aria-label="减小字号"><LetterA /></Tool>
            </Row>
          </Row>
          <Row>
            <Tool $w={24} aria-label="加粗"><Bold /></Tool>
            <Split w={42} label="填充颜色"><Fill /></Split>
            <Split w={42} label="字体颜色"><FontColor /></Split>
            <MiniAlign>
              <AlignHalf $w={23} $on aria-label="居中"><Ic s={16}><path d="M3.500 4.500h10M2 8.500h13M3.500 12.500h10" /></Ic></AlignHalf>
              <AlignHalf $w={14} aria-label="对齐选项"><Chev /></AlignHalf>
            </MiniAlign>
            <Split w={43} label="边框"><Borders /></Split>
            <Tool $w={28} aria-label="格式刷"><Brush /></Tool>
            <Tool $w={24} $on aria-label="自动换行"><Wrap /></Tool>
          </Row>
        </div>
        <VLine $h={48} $m="5px 8px 0 9px" />
        <Big icon={<Merge s={22} />} text="合并" chev />
        <Big icon={<Sum s={20} />} text="求和" chev />
      </MiniBar>

      <Menu role="menu">
        <ClipRow>
          <Bare $w={24} aria-label="复制"><Copy s={20} /></Bare>
          <Bare $w={24} aria-label="剪切"><Cut s={20} /></Bare>
          <Bare $w={24} aria-label="粘贴"><Paste s={20} /></Bare>
          <Bare $w={24} aria-label="只粘贴文本"><PasteText /></Bare>
          <Bare $w={24} aria-label="选择性粘贴"><PasteList /></Bare>
        </ClipRow>
        {menuGroups.map((g, gi) => (
          <React.Fragment key={gi}>
            <Rule />
            {g.map((it) => (
              <MenuItem key={it.text} role="menuitem">
                <IconSlot>{it.icon}</IconSlot>
                <ItemText>{it.text}</ItemText>
                {it.hotkey && <Shortcut>{it.hotkey}</Shortcut>}
                {it.tail && <Tail $line={it.line}>{it.tail}</Tail>}
              </MenuItem>
            ))}
          </React.Fragment>
        ))}
      </Menu>

      <Pointer width="112" height="108" viewBox="0 0 112 108" aria-hidden="true">
        <path d="M103 7 20 87" stroke="#f01010" strokeWidth="3.5" strokeLinecap="round" />
        <path d="M7 99 22 77l2 6 8 1z" fill="#f01010" stroke="#f01010" strokeWidth="1" />
      </Pointer>

      <Watermark>
        <svg width="44" height="42" viewBox="0 0 44 42" aria-hidden="true">
          <defs>
            <linearGradient id="wave" x1="0" y1="1" x2="1" y2="0">
              <stop offset="0" stopColor="#3f74bd" />
              <stop offset="1" stopColor="#55c3ec" />
            </linearGradient>
            <linearGradient id="leaf" x1="0" y1="1" x2="1" y2="0">
              <stop offset="0" stopColor="#d9dd4a" />
              <stop offset="1" stopColor="#3fb46b" />
            </linearGradient>
          </defs>
          <path d="M43 2Q20-1 7 14-3 27 7 36q-3-10 6-19Q24 6 43 2z" fill="url(#wave)" />
          <path d="M6 39q22 3 34-10 6-10-4-15 3 8-5 14Q22 36 6 39z" fill="url(#leaf)" />
          <path d="M10 30q-2-9 7-12 8-2 9 4-1 7-9 6 6-2 5-5-3-3-7 0-4 3-5 7z" fill="#4b83c8" />
        </svg>
        <div>
          <MarkName>极光下载站</MarkName>
          <MarkUrl>www.xz7.com</MarkUrl>
        </div>
      </Watermark>
    </Page>
  );
}
